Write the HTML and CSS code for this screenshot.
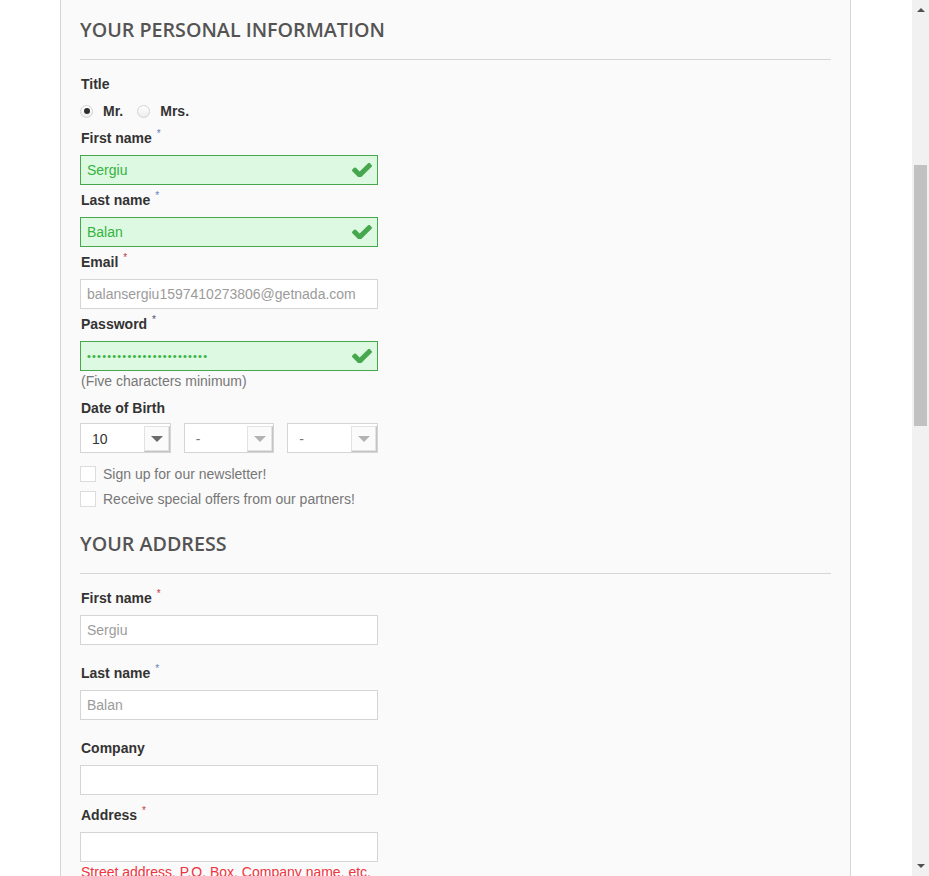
FILE: index.html
```html
<!DOCTYPE html>
<html lang="en">
<head>
<meta charset="utf-8">
<title>Create an account</title>
<link rel="stylesheet" href="styles.css">
</head>
<body>
<div class="viewport">
  <main class="page">
    <div class="panel">
      <form class="account-form">
        <h3 class="section-title">Your personal information</h3>

        <div class="title-group">
          <span class="label">Title</span>
          <div class="radios">
            <label class="radio-item"><span class="radio checked"></span>Mr.</label>
            <label class="radio-item"><span class="radio"></span>Mrs.</label>
          </div>
        </div>

        <div class="group">
          <label class="label">First name <sup class="req blue">*</sup></label>
          <div class="input-wrap">
            <input class="input ok" type="text" value="Sergiu">
            <svg class="check" viewBox="120 360 1552 1070" aria-hidden="true"><path d="M1671 566q0 40-28 68l-724 724-136 136q-28 28-68 28t-68-28l-136-136-362-362q-28-28-28-68t28-68l136-136q28-28 68-28t68 28l294 295 656-657q28-28 68-28t68 28l136 136q28 28 28 68z"/></svg>
          </div>
        </div>

        <div class="group">
          <label class="label">Last name <sup class="req blue">*</sup></label>
          <div class="input-wrap">
            <input class="input ok" type="text" value="Balan">
            <svg class="check" viewBox="120 360 1552 1070" aria-hidden="true"><path d="M1671 566q0 40-28 68l-724 724-136 136q-28 28-68 28t-68-28l-136-136-362-362q-28-28-28-68t28-68l136-136q28-28 68-28t68 28l294 295 656-657q28-28 68-28t68 28l136 136q28 28 28 68z"/></svg>
          </div>
        </div>

        <div class="group">
          <label class="label">Email <sup class="req red">*</sup></label>
          <div class="input-wrap">
            <input class="input" type="text" value="balansergiu1597410273806@getnada.com">
          </div>
        </div>

        <div class="group">
          <label class="label">Password <sup class="req dark">*</sup></label>
          <div class="input-wrap">
            <input class="input ok dots" type="text" value="••••••••••••••••••••••••">
            <svg class="check" viewBox="120 360 1552 1070" aria-hidden="true"><path d="M1671 566q0 40-28 68l-724 724-136 136q-28 28-68 28t-68-28l-136-136-362-362q-28-28-28-68t28-68l136-136q28-28 68-28t68 28l294 295 656-657q28-28 68-28t68 28l136 136q28 28 28 68z"/></svg>
          </div>
          <p class="hint">(Five characters minimum)</p>
        </div>

        <div class="dob-group">
          <span class="label dob-label">Date of Birth</span>
          <div class="selects">
            <div class="select"><span class="select-value">10</span><span class="select-btn"><i class="caret"></i></span></div>
            <div class="select"><span class="select-value muted">-</span><span class="select-btn"><i class="caret light"></i></span></div>
            <div class="select"><span class="select-value muted">-</span><span class="select-btn"><i class="caret light"></i></span></div>
          </div>
        </div>

        <div class="checks">
          <label class="check-row"><span class="box"></span>Sign up for our newsletter!</label>
          <label class="check-row"><span class="box"></span>Receive special offers from our partners!</label>
        </div>

        <h3 class="section-title address-title">Your address</h3>

        <div class="agroup first">
          <label class="label">First name <sup class="req red">*</sup></label>
          <input class="input" type="text" value="Sergiu">
        </div>

        <div class="agroup">
          <label class="label">Last name <sup class="req blue">*</sup></label>
          <input class="input" type="text" value="Balan">
        </div>

        <div class="agroup">
          <label class="label">Company</label>
          <input class="input" type="text" value="">
        </div>

        <div class="agroup address">
          <label class="label">Address <sup class="req red">*</sup></label>
          <input class="input" type="text" value="">
          <p class="hint error">Street address, P.O. Box, Company name, etc.</p>
        </div>
      </form>
    </div>
  </main>
  <div class="scrollbar" aria-hidden="true">
    <div class="sb-btn"><i class="sb-arrow up"></i></div>
    <div class="sb-track"><div class="sb-thumb"></div></div>
    <div class="sb-btn"><i class="sb-arrow down"></i></div>
  </div>
</div>
</body>
</html>
```

FILE: styles.css
```css
* { box-sizing: border-box; }

html, body {
  margin: 0;
  padding: 0;
  background: #ffffff;
}

body {
  font-family: "Liberation Sans", Arial, sans-serif;
  font-size: 14px;
  color: #333333;
}

.viewport {
  display: flex;
  height: 876px;
  overflow: hidden;
}

.page {
  flex: 1;
  padding-left: 60px;
  overflow: hidden;
}

.panel {
  width: 791px;
  min-height: 900px;
  background: #fafafa;
  border-left: 1px solid #d6d4d4;
  border-right: 1px solid #d6d4d4;
  padding: 18px 19px 40px 20px;
}

.section-title {
  margin: 0;
  font-family: "Open Sans", sans-serif;
  font-weight: 600;
  font-size: 19.7px;
  line-height: 24px;
  color: #555454;
  text-transform: uppercase;
  padding-bottom: 17px;
  border-bottom: 1px solid #d6d4d4;
  margin-left: -1px;
}

.address-title {
  margin-top: 21px;
}

.label {
  display: block;
  font-weight: bold;
  font-size: 14px;
  line-height: 18px;
  color: #333333;
  margin-bottom: 8px;
}

.req {
  font-size: 10px;
  line-height: 0;
  vertical-align: 6px;
  margin-left: 1px;
  font-weight: normal;
}
.req.blue { color: #5f7fb8; }
.req.red { color: #c0394a; }
.req.dark { color: #4b4f6e; }

/* title radios */
.title-group {
  margin-top: 15px;
  margin-bottom: 9px;
}
.title-group .label {
  margin-bottom: 9px;
}
.radios {
  display: flex;
  align-items: center;
  gap: 14px;
  height: 18px;
  margin-left: -1px;
}
.radio-item {
  display: flex;
  align-items: center;
  font-weight: bold;
  font-size: 14px;
  color: #333333;
}
.radio {
  width: 13px;
  height: 13px;
  border-radius: 50%;
  border: 1px solid #d2d2d2;
  background: linear-gradient(#ffffff, #ececec);
  margin-right: 10px;
  display: flex;
  align-items: center;
  justify-content: center;
}
.radio.checked::after {
  content: "";
  width: 6px;
  height: 6px;
  border-radius: 50%;
  background: #2e2e2e;
}

/* personal fields */
.group {
  margin-bottom: 6px;
}

.input-wrap {
  position: relative;
  width: 298px;
}

.input {
  display: block;
  width: 298px;
  height: 30px;
  margin: 0 0 0 -1px;
  padding: 0 6px;
  border: 1px solid #d6d4d4;
  background: #ffffff;
  font-family: "Liberation Sans", Arial, sans-serif;
  font-size: 14px;
  color: #9c9b9b;
  outline: none;
  border-radius: 0;
}

.input.ok {
  background: #ddf9e1;
  border-color: #46a74e;
  color: #35b33f;
}

.input.dots {
  font-size: 11px;
  letter-spacing: 1.2px;
}

.check {
  position: absolute;
  right: 7px;
  top: 8px;
  width: 20px;
  height: 14px;
  fill: #46a74e;
}

.hint {
  margin: 1px 0 0;
  font-size: 14px;
  line-height: 18px;
  color: #777777;
}
.hint.error {
  color: #f13340;
}

/* date of birth */
.dob-group {
  margin-top: 9px;
}
.dob-label {
  margin-bottom: 6px;
}
.selects {
  display: grid;
  grid-template-columns: repeat(3, 1fr);
  column-gap: 13px;
  width: 298px;
  margin-left: -1px;
}
.select {
  display: flex;
  align-items: center;
  justify-content: space-between;
  height: 30px;
  border: 1px solid #d6d4d4;
  background: #ffffff;
  padding: 2px 0 0 11px;
}
.select-value {
  font-size: 14px;
  color: #333333;
}
.select-value.muted {
  color: #777777;
}
.select-btn {
  align-self: stretch;
  width: 26px;
  background: #fbfbfb;
  border: 1px solid #e2e2e2;
  border-right-color: #c4c4c4;
  border-bottom-color: #c4c4c4;
  box-shadow: inset -1px -1px 0 #e3e3e3;
  display: flex;
  align-items: center;
  justify-content: center;
}
.caret {
  width: 0;
  height: 0;
  border-left: 6px solid transparent;
  border-right: 6px solid transparent;
  border-top: 6px solid #6b6b6b;
}
.caret.light {
  border-top-color: #b3b3b3;
}

/* checkboxes */
.checks {
  margin-top: 8px;
  margin-left: -1px;
}
.check-row {
  display: flex;
  align-items: center;
  height: 25px;
  font-size: 14px;
  color: #777777;
}
.box {
  width: 16px;
  height: 16px;
  border: 1px solid #dcdcdc;
  background: #ffffff;
  margin-right: 7px;
}

/* address */
.agroup {
  margin-bottom: 19px;
}
.agroup.first {
  margin-top: 15px;
}
.agroup .label {
  margin-bottom: 8px;
}
.agroup.address {
  margin-top: -8px;
}

/* scrollbar */
.scrollbar {
  width: 17px;
  flex: 0 0 17px;
  background: #f1f1f1;
  display: flex;
  flex-direction: column;
}
.sb-btn {
  height: 20px;
  display: flex;
  align-items: center;
  justify-content: center;
}
.sb-track {
  flex: 1;
}
.sb-thumb {
  margin: 145px 2px 0;
  height: 261px;
  background: #c1c1c1;
}
.sb-arrow {
  width: 0;
  height: 0;
  border-left: 4px solid transparent;
  border-right: 4px solid transparent;
}
.sb-arrow.up {
  border-bottom: 4px solid #505050;
}
.sb-arrow.down {
  border-top: 4px solid #505050;
}
```
